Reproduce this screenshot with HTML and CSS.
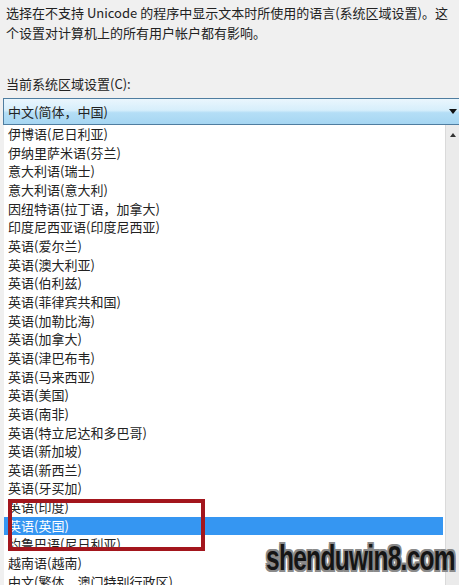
FILE: index.html
```html
<!DOCTYPE html>
<html lang="zh-CN">
<head>
    <meta charset="UTF-8">
    <title>区域设置</title>
    <link rel="stylesheet" href="styles.css">
</head>
<body>
    <div class="panel">
        <p class="intro">选择在不支持 Unicode 的程序中显示文本时所使用的语言(系统区域设置)。这<br>个设置对计算机上的所有用户帐户都有影响。</p>

        <div class="label">当前系统区域设置(C):</div>

        <!-- 下拉框 -->
        <div class="combo">
            <span>中文(简体，中国)</span>
            <span class="arrow"></span>
        </div>

        <div class="dropdown">
            <ul class="items">
                <li>伊博语(尼日利亚)</li>
                <li>伊纳里萨米语(芬兰)</li>
                <li>意大利语(瑞士)</li>
                <li>意大利语(意大利)</li>
                <li>因纽特语(拉丁语，加拿大)</li>
                <li>印度尼西亚语(印度尼西亚)</li>
                <li>英语(爱尔兰)</li>
                <li>英语(澳大利亚)</li>
                <li>英语(伯利兹)</li>
                <li>英语(菲律宾共和国)</li>
                <li>英语(加勒比海)</li>
                <li>英语(加拿大)</li>
                <li>英语(津巴布韦)</li>
                <li>英语(马来西亚)</li>
                <li>英语(美国)</li>
                <li>英语(南非)</li>
                <li>英语(特立尼达和多巴哥)</li>
                <li>英语(新加坡)</li>
                <li>英语(新西兰)</li>
                <li>英语(牙买加)</li>
                <li>英语(印度)</li>
                <li class="selected">英语(英国)</li>
                <li>约鲁巴语(尼日利亚)</li>
                <li>越南语(越南)</li>
                <li>中文(繁体，澳门特别行政区)</li>
            </ul>
            <div class="scrollbar"><span class="up"></span></div>
        </div>

        <div class="mark"></div>
        <div class="watermark">shenduwin8.com</div>
    </div>
</body>
</html>
```

FILE: styles.css
```css
body {
    margin: 0;
    background: #f0f0f0;
    font-family: "Noto Sans CJK SC", "Liberation Sans", sans-serif;
    font-size: 13px;
    color: #222;
    overflow: hidden;
}
.panel {
    position: relative;
    height: 585px;
}
.intro {
    margin: 0;
    padding: 3px 0 0 6px;
    line-height: 20px;
    white-space: nowrap;
}
.label {
    margin-top: 31px;
    padding-left: 6px;
    line-height: 20px;
}
.combo {
    margin: 4px 0 0 3px;
    height: 25px;
    border: 1px solid #4f7da0;
    border-right: none;
    background: linear-gradient(#eaf6fd, #d6eefb 45%, #b4def6 55%, #a6d6f2);
    display: flex;
    align-items: center;
    justify-content: space-between;
    padding-left: 4px;
}
.arrow {
    width: 0;
    height: 0;
    border-left: 4px solid transparent;
    border-right: 4px solid transparent;
    border-top: 5px solid #111;
    margin-right: 2px;
}
.dropdown {
    display: flex;
    margin-left: 4px;
    height: 460px;
    background: #fff;
}
.items {
    list-style: none;
    margin: 0;
    padding: 0;
    flex: 1;
}
.items li {
    height: 18.67px;
    line-height: 18.67px;
    padding-left: 4px;
    white-space: nowrap;
}
.items li.selected {
    background: #3596f2;
    color: #fff;
    margin-right: 2px;
}
.scrollbar {
    width: 13px;
    border-left: 1px solid #dadada;
    background: #ebebeb;
    display: flex;
    justify-content: center;
    padding-top: 8px;
}
.up {
    width: 0;
    height: 0;
    border-left: 3px solid transparent;
    border-right: 3px solid transparent;
    border-bottom: 4px solid #333;
}
.mark {
    position: absolute;
    left: 8px;
    top: 499px;
    width: 189px;
    height: 44px;
    border: 4px solid #a3161d;
}
.watermark {
    position: absolute;
    left: 266px;
    top: 538px;
    font-family: "Liberation Sans", Arial, sans-serif;
    font-size: 35px;
    font-weight: bold;
    letter-spacing: -1px;
    color: #151515;
    transform: scaleX(0.7);
    transform-origin: left top;
    text-shadow: 2px 2px 0 #8a8a8a, -2px -2px 0 #8a8a8a, 2px -2px 0 #8a8a8a, -2px 2px 0 #8a8a8a, 2px 0 0 #8a8a8a, -2px 0 0 #8a8a8a, 0 2px 0 #8a8a8a, 0 -2px 0 #8a8a8a;
}
```
